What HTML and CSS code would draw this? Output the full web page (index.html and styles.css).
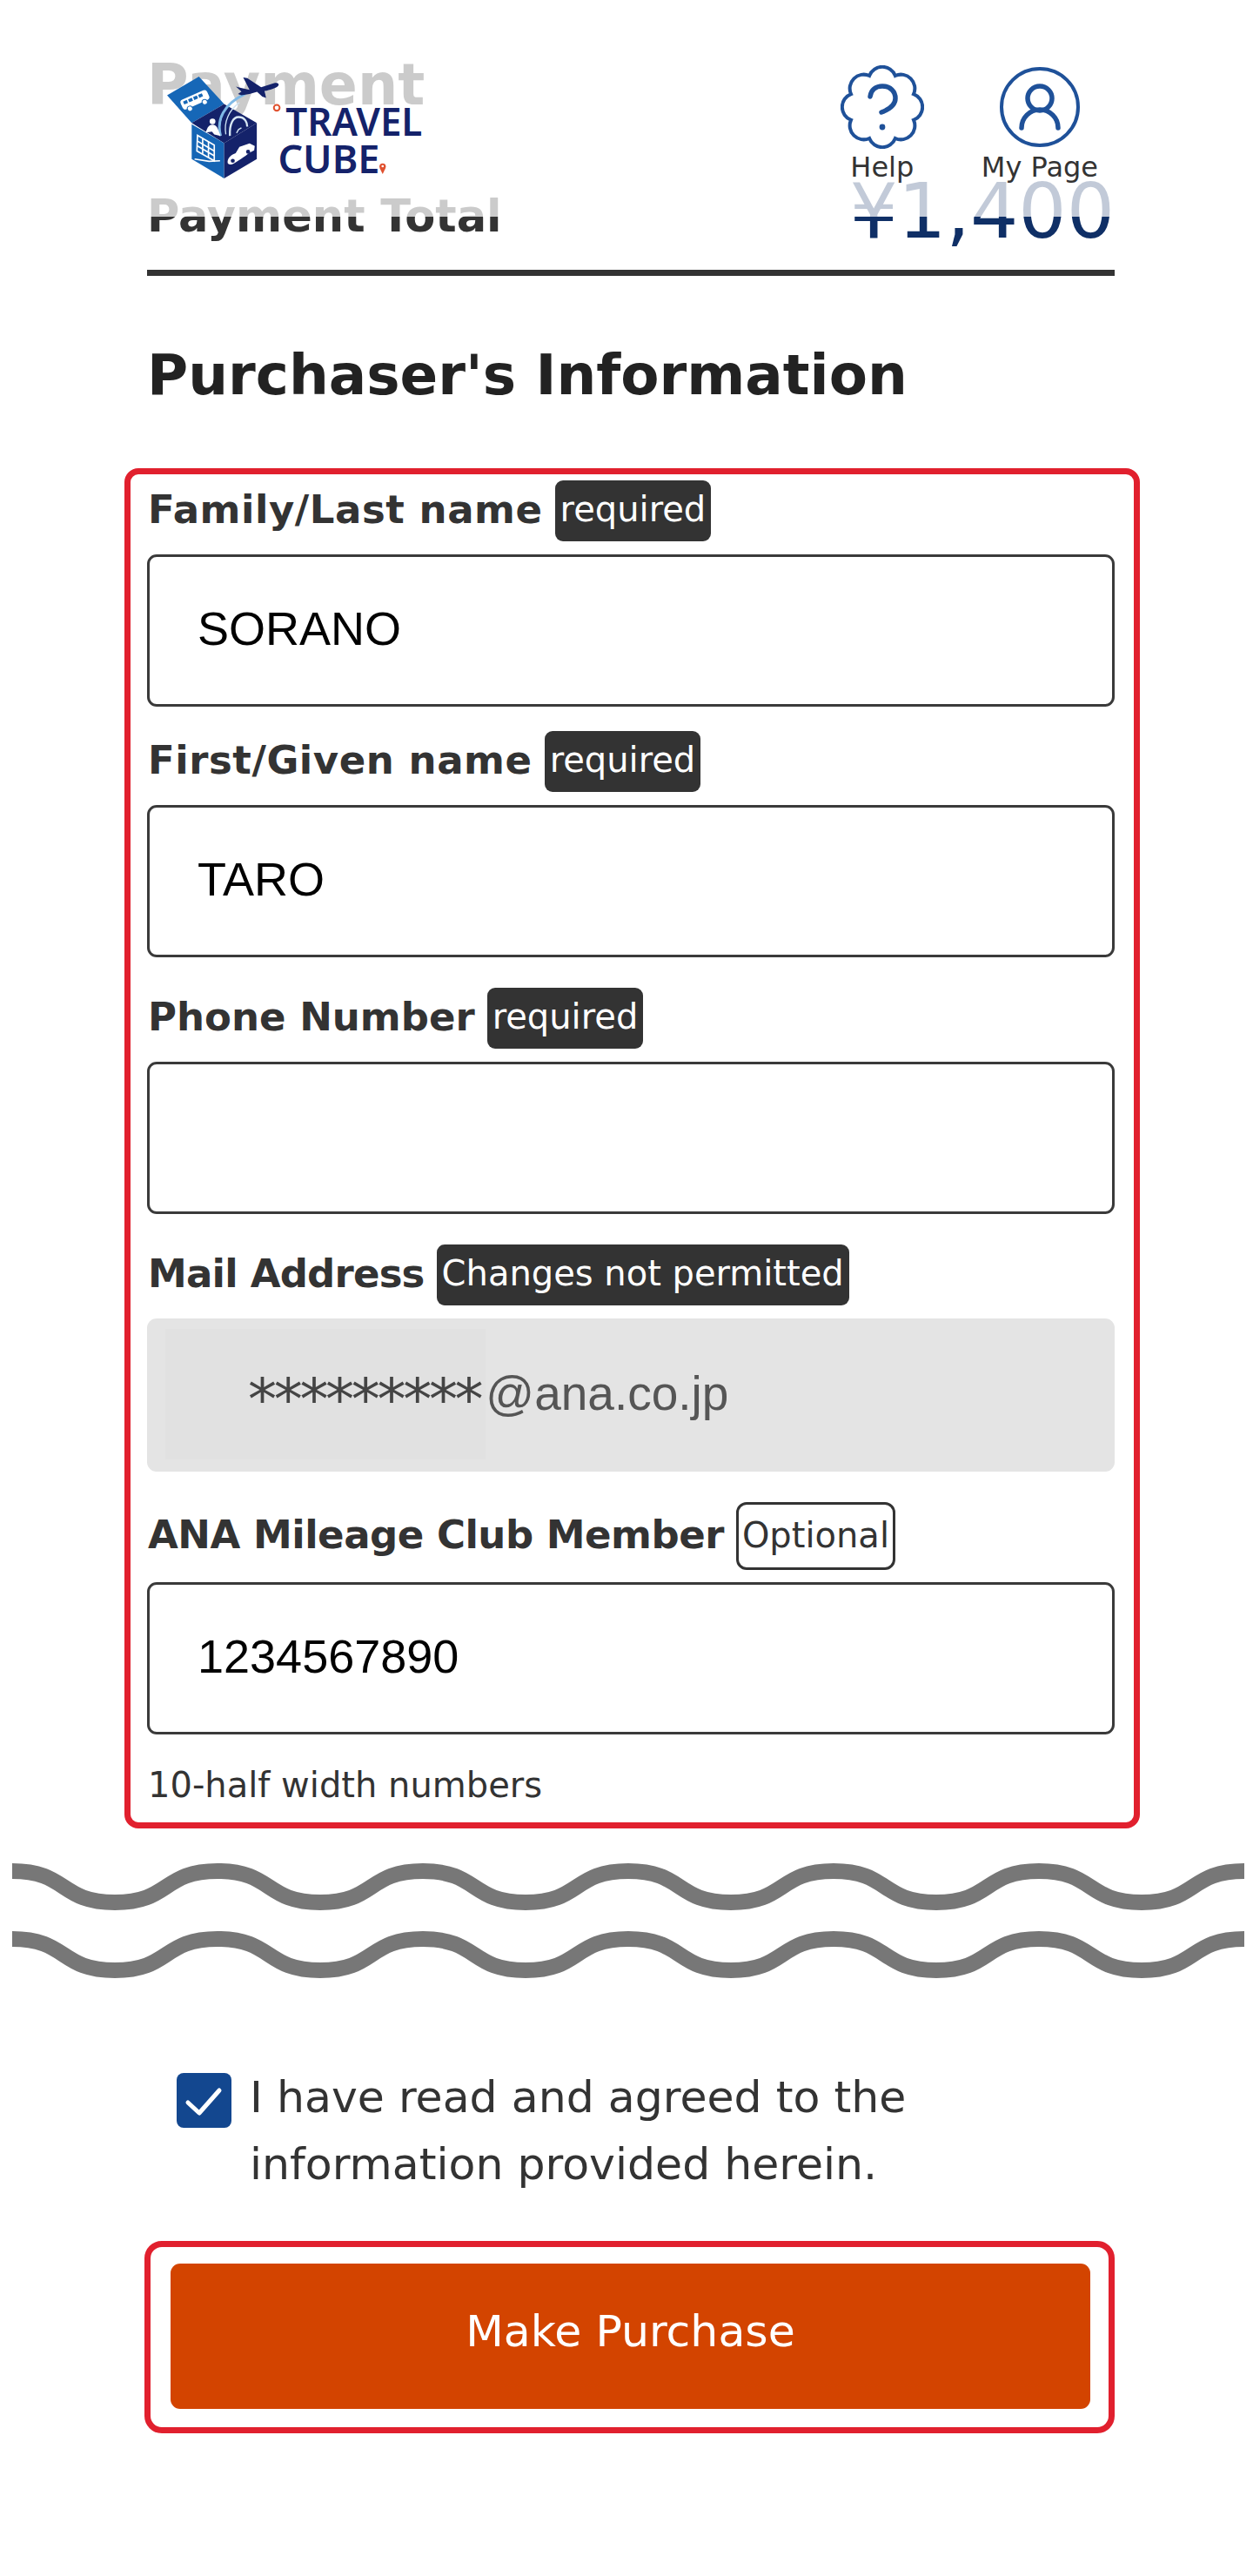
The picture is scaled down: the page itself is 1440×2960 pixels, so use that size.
FILE: index.html
```html
<!DOCTYPE html>
<html lang="en">
<head>
<meta charset="utf-8">
<title>Payment - Travel Cube</title>
<link rel="stylesheet" href="styles.css">
</head>
<body>
<header class="site-header">
  <svg class="logo" viewBox="150 100 900 400" role="img" aria-label="Travel Cube">
    <polygon points="155,210 265,145 352,240 240,305" fill="#1667b7"/>
    <polygon points="240,305 352,240 465,305 352,375" fill="#14226a"/>
    <polygon points="240,310 352,375 352,497 240,430" fill="#1565b5"/>
    <polygon points="352,375 465,305 465,430 352,497" fill="#14226a"/>
    <g transform="rotate(-24 250 228)">
      <rect x="202" y="208" width="100" height="36" rx="10" fill="#fff"/>
      <rect x="212" y="215" width="14" height="11" fill="#1667b7"/>
      <rect x="231" y="215" width="14" height="11" fill="#1667b7"/>
      <rect x="250" y="215" width="14" height="11" fill="#1667b7"/>
      <rect x="269" y="215" width="14" height="11" fill="#1667b7"/>
      <circle cx="224" cy="247" r="9" fill="#fff" stroke="#1667b7" stroke-width="3"/>
      <circle cx="280" cy="247" r="9" fill="#fff" stroke="#1667b7" stroke-width="3"/>
    </g>
    <path d="M340 350C325 295 350 240 425 205" fill="none" stroke="#7fb9e6" stroke-width="9"/>
    <path d="M358 345C350 300 370 260 405 235" fill="none" stroke="#cfe4f5" stroke-width="4"/>
    <path d="M393 180L410 184 440 191 418 148 432 150 480 182 525 168C538 165 545 172 538 178 530 186 510 191 492 195L497 219 484 214 466 198 440 205 412 210 400 205 412 197Z" fill="#14226a"/>
    <circle cx="312" cy="300" r="10" fill="#fff"/>
    <path d="M295 322C305 305 325 310 330 325L340 350 318 345 310 335 288 338Z" fill="#fff"/>
    <path d="M372 350C370 305 385 285 402 285 425 285 432 305 432 318" fill="none" stroke="#d8e8f5" stroke-width="7"/>
    <path d="M395 340L402 328 412 322" fill="none" stroke="#d8e8f5" stroke-width="4"/>
    <g fill="none" stroke="#fff" stroke-width="5">
      <path d="M260 348L318 382V436L258 402Z"/>
      <path d="M260 368L318 402M260 385L318 419M278 358V412M298 370V424"/>
      <path d="M250 430L300 438 338 436"/>
    </g>
    <path d="M364 440C365 425 378 415 392 410L405 388 440 376 458 385 456 400 440 408C425 420 395 440 380 448 372 450 364 450 364 440Z" fill="#fff"/>
    <circle cx="382" cy="436" r="7" fill="#14226a"/>
    <circle cx="435" cy="405" r="7" fill="#14226a"/>
    <text class="logo-word" x="565" y="350" textLength="472" lengthAdjust="spacingAndGlyphs">TRAVEL</text>
    <text class="logo-word" x="538" y="478" textLength="352" lengthAdjust="spacingAndGlyphs">CUBE</text>
    <circle cx="534" cy="253" r="10" fill="#fff" stroke="#e0512f" stroke-width="6"/>
    <circle cx="900" cy="456" r="11" fill="#e0512f"/>
    <path d="M890 462L900 482 910 462Z" fill="#e0512f"/>
    <circle cx="900" cy="455" r="4" fill="#fff"/>
  </svg>
  <nav class="site-nav">
    <a class="nav-item">
      <svg class="nav-icon" viewBox="-48 -48 96 96">
        <path class="icon-line" d="M-14.9 -36A16 16 0 0 1 14.9 -36A16 16 0 0 1 36 -14.9A16 16 0 0 1 36 14.9A16 16 0 0 1 14.9 36A16 16 0 0 1 -14.9 36A16 16 0 0 1 -36 14.9A16 16 0 0 1 -36 -14.9A16 16 0 0 1 -14.9 -36Z"/>
        <path class="icon-bold" d="M-14 -12C-13 -20 -7 -24 0 -24C9 -24 15 -18 15 -10C15 -2 7 3 -1 6"/>
        <circle cx="0" cy="23" r="3.4" fill="#1f5199"/>
      </svg>
      <span>Help</span>
    </a>
    <a class="nav-item">
      <svg class="nav-icon" viewBox="-48 -48 96 96">
        <circle class="icon-line" cx="0" cy="0" r="44"/>
        <circle class="icon-bold" cx="0" cy="-10" r="14"/>
        <path class="icon-bold" d="M-21 24A21 21 0 0 1 21 24"/>
      </svg>
      <span>My Page</span>
    </a>
  </nav>
</header>

<main class="content">
  <h2 class="page-title">Payment</h2>
  <div class="total-row">
    <span class="total-label">Payment Total</span>
    <span class="total-price">¥1,400</span>
  </div>
  <h2 class="section-title">Purchaser's Information</h2>

  <form class="form-box">
    <div class="field field--close">
      <div class="field-label label--wide"><label>Family/Last name</label><span class="badge">required</span></div>
      <input class="text-input" type="text" value="SORANO">
    </div>
    <div class="field">
      <div class="field-label label--wide"><label>First/Given name</label><span class="badge">required</span></div>
      <input class="text-input" type="text" value="TARO">
    </div>
    <div class="field">
      <div class="field-label"><label>Phone Number</label><span class="badge">required</span></div>
      <input class="text-input" type="text" value="">
    </div>
    <div class="field">
      <div class="field-label label--narrow"><label>Mail Address</label><span class="badge">Changes not permitted</span></div>
      <div class="locked-input"><span class="masked">*********</span><span>@ana.co.jp</span></div>
    </div>
    <div class="field field--optional">
      <div class="field-label label--snug"><label>ANA Mileage Club Member</label><span class="badge badge--outline">Optional</span></div>
      <input class="text-input" type="text" value="1234567890">
    </div>
    <p class="field-note">10-half width numbers</p>
  </form>
</main>

<div class="waves">
  <svg class="wave" viewBox="0 0 1416 54" preserveAspectRatio="none">
    <path d="M0 9C64 9 54 45 118 45S172 9 236 9S290 45 354 45S408 9 472 9S526 45 590 45S644 9 708 9S762 45 826 45S880 9 944 9S998 45 1062 45S1116 9 1180 9S1234 45 1298 45S1352 9 1416 9"/>
  </svg>
  <svg class="wave" viewBox="0 0 1416 54" preserveAspectRatio="none">
    <path d="M0 9C64 9 54 45 118 45S172 9 236 9S290 45 354 45S408 9 472 9S526 45 590 45S644 9 708 9S762 45 826 45S880 9 944 9S998 45 1062 45S1116 9 1180 9S1234 45 1298 45S1352 9 1416 9"/>
  </svg>
</div>

<div class="agree">
  <span class="checkbox">
    <svg viewBox="0 0 63 63"><path d="M13 34L26 46 49 20"/></svg>
  </span>
  <p class="agree-text">I have read and agreed to the<br>information provided herein.</p>
</div>

<div class="cta-box">
  <button class="cta-button" type="button">Make Purchase</button>
</div>
</body>
</html>
```

FILE: styles.css
```css
* {
  box-sizing: border-box;
}

html,
body {
  margin: 0;
  padding: 0;
  background: #fff;
}

body {
  position: relative;
  min-height: 2960px;
  font-family: "DejaVu Sans", Verdana, sans-serif;
  color: #333;
}

.site-header {
  position: absolute;
  top: 0;
  left: 0;
  right: 0;
  height: 249px;
  display: flex;
  justify-content: space-between;
  align-items: flex-start;
  padding: 0 178px 0 190px;
  background: rgba(255, 255, 255, 0.75);
}

.logo {
  width: 300px;
  height: 133px;
  margin-top: 73px;
}

.logo-word {
  font-family: "Noto Sans", sans-serif;
  font-size: 138px;
  font-weight: 600;
  fill: #14226a;
}

.site-nav {
  display: flex;
  gap: 66px;
  margin-top: 75px;
}

.nav-item {
  display: flex;
  flex-direction: column;
  align-items: center;
  min-width: 96px;
  font-size: 32px;
  line-height: 40px;
  color: #333;
}

.nav-icon {
  display: block;
  width: 96px;
  height: 96px;
  margin-bottom: 1px;
}

.icon-line {
  fill: none;
  stroke: #1f5199;
  stroke-width: 4;
}

.icon-bold {
  fill: none;
  stroke: #1f5199;
  stroke-width: 5.5;
  stroke-linecap: round;
}

.content {
  padding: 63px 159px 0 169px;
}

.page-title {
  margin: 0 0 68px;
  font-size: 65px;
  line-height: 70px;
  font-weight: 700;
}

.total-row {
  display: flex;
  justify-content: space-between;
  align-items: flex-start;
  height: 116px;
  border-bottom: 7px solid #333;
}

.total-label {
  margin-top: 18px;
  font-size: 51px;
  line-height: 60px;
  font-weight: 700;
}

.total-price {
  margin-top: -3px;
  font-size: 87px;
  line-height: 90px;
  color: #0f2f66;
}

.section-title {
  margin: 74px 0 67px;
  font-size: 64.4px;
  line-height: 80px;
  font-weight: 700;
  color: #222;
}

.form-box {
  display: flex;
  flex-direction: column;
  margin: 0 -29px 0 -26px;
  padding: 7px 22px 18px 19px;
  border: 7px solid #e1202e;
  border-radius: 16px;
}

.field {
  display: flex;
  flex-direction: column;
  gap: 15px;
  margin-bottom: 35px;
}

.field--close {
  margin-bottom: 28px;
}

.field--optional {
  gap: 14px;
  margin-bottom: 33px;
}

.field-label {
  display: flex;
  align-items: center;
  gap: 14px;
  padding-left: 1px;
  font-size: 45px;
  font-weight: 700;
}

.field-label label {
  margin-bottom: 3px;
}

.label--wide label {
  letter-spacing: 0.55px;
}

.label--narrow label {
  letter-spacing: -0.8px;
}

.label--snug label {
  letter-spacing: -0.5px;
}

.badge {
  display: flex;
  align-items: center;
  height: 70px;
  padding: 0 6px 4px;
  border-radius: 9px;
  background: #333;
  color: #fff;
  font-size: 40px;
  font-weight: 400;
}

.badge--outline {
  height: 78px;
  padding: 0 4px 3px;
  border: 3px solid #333;
  background: #fff;
  color: #333;
  border-radius: 12px;
}

.text-input {
  display: block;
  width: 100%;
  height: 175px;
  padding: 0 0 5px 55px;
  border: 3px solid #3a3a3a;
  border-radius: 11px;
  background: #fff;
  color: #000;
  font-family: "Liberation Sans", Arial, sans-serif;
  font-size: 54px;
  outline: none;
}

.locked-input {
  display: flex;
  align-items: stretch;
  height: 176px;
  padding: 12px 0 14px 21px;
  border-radius: 11px;
  background: #e4e4e4;
  color: #555;
  font-family: "Liberation Sans", Arial, sans-serif;
  font-size: 55px;
}

.locked-input span {
  display: flex;
  align-items: center;
  padding-bottom: 2px;
}

.locked-input .masked {
  padding: 12px 6px 0 95px;
  background: #e1e1e1;
  font-family: "DejaVu Sans", sans-serif;
  font-size: 66px;
  letter-spacing: -3.3px;
  color: #444;
}

.field-note {
  margin: 0;
  padding-left: 1px;
  font-size: 40px;
  line-height: 50px;
}

.waves {
  display: flex;
  flex-direction: column;
  gap: 24px;
  margin-top: 40px;
  padding-left: 14px;
}

.wave {
  display: block;
  width: 1416px;
  height: 54px;
}

.wave path {
  fill: none;
  stroke: #777;
  stroke-width: 18;
}

.agree {
  display: flex;
  gap: 21px;
  margin-top: 100px;
  padding-left: 203px;
}

.checkbox {
  flex: none;
  width: 63px;
  height: 63px;
  margin-top: 9px;
  border-radius: 8px;
  background: #13478f;
}

.checkbox svg {
  display: block;
  width: 63px;
  height: 63px;
}

.checkbox path {
  fill: none;
  stroke: #fff;
  stroke-width: 5;
  stroke-linecap: round;
  stroke-linejoin: round;
}

.agree-text {
  margin: -2px 0 0;
  font-size: 50.5px;
  line-height: 77px;
  color: #333;
}

.cta-box {
  width: 1115px;
  height: 221px;
  margin: 50px 0 0 166px;
  padding: 19px 21px 21px 23px;
  border: 7px solid #e1202e;
  border-radius: 20px;
}

.cta-button {
  display: block;
  width: 100%;
  height: 167px;
  padding: 0 0 13px;
  border: 0;
  border-radius: 11px;
  background: #d34400;
  color: #fff;
  font-family: "DejaVu Sans", Verdana, sans-serif;
  font-size: 50.5px;
}
```
